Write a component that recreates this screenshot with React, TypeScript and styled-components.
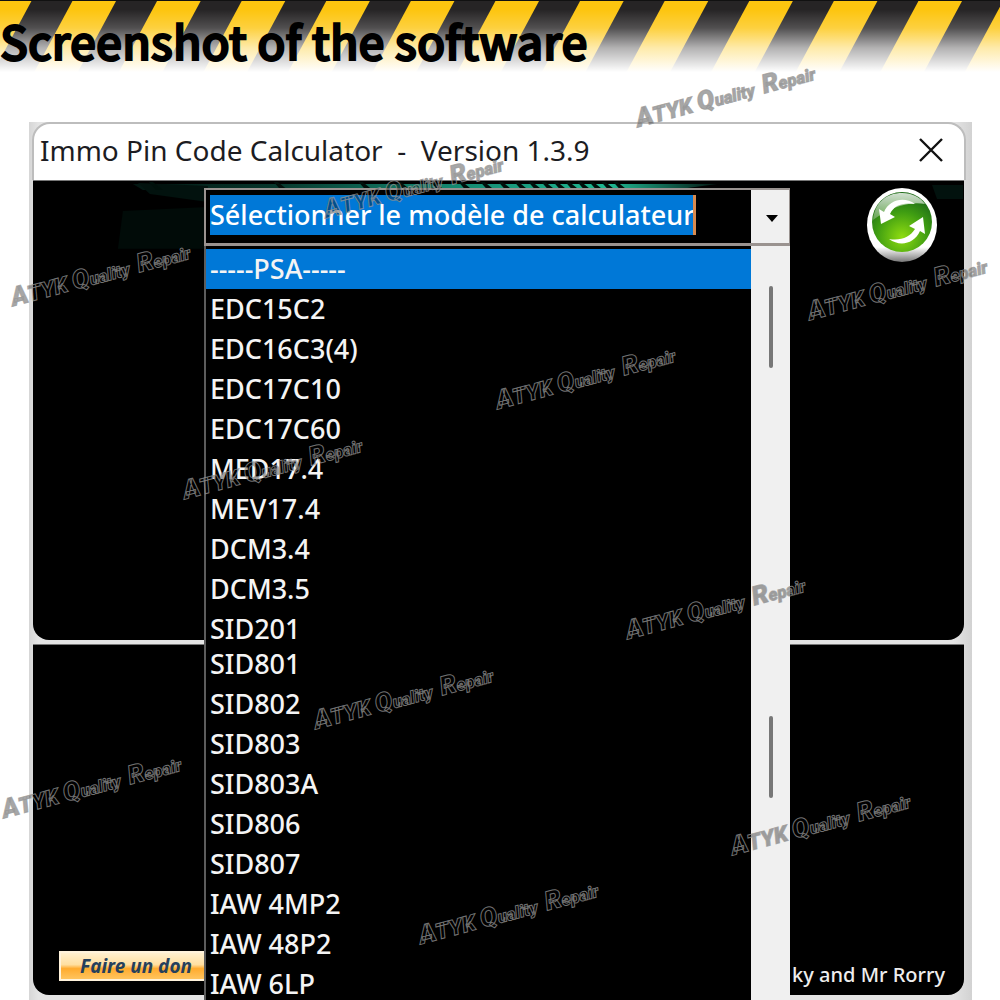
import React, { useState } from "react";
import styled, { createGlobalStyle } from "styled-components";

const Global = createGlobalStyle`
  *, *::before, *::after { box-sizing: border-box; }
  html { overflow: hidden; }
  body { margin: 0; background: #fff; }
`;

const uiFont = `"Noto Sans", "Open Sans", sans-serif`;

const Page = styled.main`
  position: relative;
  height: 100vh;
  overflow: hidden;
  display: flex;
  flex-direction: column;
  background: #fff;
  font-family: ${uiFont};
`;

const Banner = styled.header`
  position: relative;
  display: flex;
  height: 122px;
  padding-top: 12px;
`;

const Stripes = styled.svg`
  position: absolute;
  inset: 0;
  width: 100%;
  height: 80px;
`;

const Heading = styled.h1`
  position: relative;
  margin: 0;
  font: 500 46px/56px "Noto Sans CJK SC", "Noto Sans", sans-serif;
  color: #000;
  -webkit-text-stroke: 2px #000;
  stroke-linejoin: round;
  white-space: nowrap;
`;

const Shot = styled.section`
  display: flex;
  flex-direction: column;
  flex: 1;
  min-height: 0;
  margin: 0 28px 0 29px;
  padding: 0 8px 0 4px;
  background: linear-gradient(90deg, #d6d6d6, #e4e4e4 1%, #e4e4e4 98%, #d2d2d2);
`;

const TitleBar = styled.div`
  display: flex;
  align-items: center;
  justify-content: space-between;
  height: 58px;
  margin: 0 -2px 0 -1px;
  padding: 0 21px 4px 6px;
  border: 2px solid #bdbdbd;
  border-bottom: 0;
  border-radius: 18px 18px 0 0;
  background: #fff;
`;

const Title = styled.h2`
  margin: 0;
  font: 400 28px/36px ${uiFont};
  color: #1c1c22;
  white-space: pre;
`;

const Close = styled.button`
  display: flex;
  padding: 0;
  border: 0;
  background: none;
`;

const Panel = styled.div<{ $upper?: boolean }>`
  position: relative;
  display: flex;
  flex-direction: column;
  justify-content: ${(p) => (p.$upper ? "flex-start" : "flex-end")};
  height: ${(p) => (p.$upper ? "460px" : "351px")};
  margin-bottom: 4px;
  border-top: 1px solid #777;
  border-radius: 0 0 16px 16px;
  background: #000;
`;

const Glow = styled.svg`
  position: absolute;
  inset: 0;
  width: 100%;
  height: 100%;
`;

const Toolbar = styled.div`
  position: relative;
  display: flex;
  align-items: flex-start;
  justify-content: space-between;
  padding: 7px 24px 0 171px;
`;

const Combo = styled.div`
  position: relative;
  z-index: 2;
  width: 586px;
`;

const Field = styled.div`
  display: flex;
  height: 58px;
  border: 2px solid #9a9390;
  border-width: 2px 1px 3px 2px;
  background: #000;
`;

const Entry = styled.div`
  display: flex;
  flex: 1;
  align-items: flex-start;
  padding: 5px 0 0 4px;
`;

const EntryInput = styled.input`
  width: 486px;
  height: 40px;
  padding: 0;
  border: 0;
  border-right: 3px solid #d98a4e;
  outline: 0;
  background: #0078d7;
  color: #fff;
  font: 500 27px/40px ${uiFont};
`;

const DropButton = styled.button`
  display: flex;
  align-items: center;
  justify-content: center;
  width: 38px;
  padding: 4px 0 0 4px;
  border: 0;
  background: #f0f0f0;
`;

const Menu = styled.div`
  position: absolute;
  top: 58px;
  left: 0;
  right: 0;
  display: flex;
  height: 760px;
  border-left: 2px solid #5c5c5c;
  background: #000;
`;

const Options = styled.ul`
  flex: 1;
  margin: 0;
  padding: 3px 0 0;
  list-style: none;
`;

const Option = styled.li<{ $active: boolean; $short?: boolean }>`
  height: ${(p) => (p.$short ? "35px" : "40px")};
  padding-left: 4px;
  background: ${(p) => (p.$active ? "#0078d7" : "transparent")};
  color: #f4f4f4;
  font: 500 27px/40px ${uiFont};
  white-space: pre;
`;

const Track = styled.div`
  display: flex;
  flex-direction: column;
  align-items: center;
  gap: 348px;
  width: 39px;
  padding-top: 40px;
  background: #f0f0f0;
`;

const Thumb = styled.span`
  width: 4px;
  height: 82px;
  border-radius: 2px;
  background: #777;
`;

const Refresh = styled.button`
  display: flex;
  padding: 0;
  border: 0;
  background: none;
`;

const Footer = styled.footer`
  position: relative;
  display: flex;
  align-items: flex-end;
  justify-content: space-between;
  padding: 0 19px 6px 26px;
`;

const Donate = styled.button`
  width: 160px;
  height: 30px;
  margin-bottom: 8px;
  padding: 0 0 0 19px;
  border: 2px solid #fff3dc;
  border-radius: 0;
  background: linear-gradient(#fff0cf, #ffdfa0 45%, #ffab2e 60%, #ffc45e);
  color: #25405c;
  font: italic 700 19px/24px "Noto Sans", sans-serif;
  text-align: left;
`;

const Credit = styled.p`
  margin: 0;
  color: #eee;
  font: 500 20px/28px ${uiFont};
`;

const Mark = styled.span<{ $x: number; $y: number }>`
  position: absolute;
  z-index: 5;
  left: ${(p) => p.$x}px;
  top: ${(p) => p.$y}px;
  transform: rotate(-15deg);
  transform-origin: 0 100%;
  pointer-events: none;
  color: rgba(0, 0, 0, 0.34);
  -webkit-text-stroke: 1px rgba(150, 150, 150, 0.75);
  font: italic 900 26px/26px Roboto, sans-serif;
  white-space: pre;
`;

const Small = styled.span<{ $size: number }>`
  font-size: ${(p) => p.$size}px;
`;

const models = [
  "-----PSA-----", "EDC15C2", "EDC16C3(4)", "EDC17C10", "EDC17C60", "MED17.4", "MEV17.4",
  "DCM3.4", "DCM3.5", "SID201", "SID801", "SID802", "SID803", "SID803A", "SID806", "SID807",
  "IAW 4MP2", "IAW 48P2", "IAW 6LP",
];

const marks = [
  [640, 105], [328, 196], [15, 284], [812, 298], [500, 387], [187, 477],
  [630, 617], [318, 707], [6, 796], [735, 833], [423, 922],
];

const glowTicks = [120, 245, 330, 368, 402, 430, 452, 470, 486, 500, 513, 525, 537, 549, 561, 573, 585];

function HazardStripes() {
  return (
    <Stripes viewBox="0 0 1000 80" preserveAspectRatio="xMinYMin slice" aria-hidden="true">
      <defs>
        <linearGradient id="fade" x1="0" y1="0" x2="0" y2="1">
          <stop offset="0.12" stopColor="#fff" stopOpacity="0" />
          <stop offset="0.35" stopColor="#fff" stopOpacity="0.2" />
          <stop offset="0.6" stopColor="#fff" stopOpacity="0.65" />
          <stop offset="0.9" stopColor="#fff" />
        </linearGradient>
      </defs>
      <rect width="1000" height="80" fill="#fdc50f" />
      {Array.from({ length: 13 }, (_, i) => {
        const x = 32 + i * 84.6;
        return <path key={i} d={`M${x} 0h41l-43 80h-41z`} fill="#262425" />;
      })}
      <rect width="1000" height="1" fill="#111" />
      <rect width="1000" height="80" fill="url(#fade)" />
    </Stripes>
  );
}

function RefreshIcon() {
  return (
    <svg width="76" height="76" viewBox="0 0 76 76" aria-hidden="true">
      <defs>
        <radialGradient id="orb" cx="0.5" cy="0.75" r="0.7">
          <stop offset="0" stopColor="#8fdc10" />
          <stop offset="0.6" stopColor="#3f9d12" />
          <stop offset="1" stopColor="#1f6d18" />
        </radialGradient>
        <linearGradient id="gloss" x1="0" y1="0" x2="0" y2="1">
          <stop offset="0" stopColor="#fff" stopOpacity="0.8" />
          <stop offset="1" stopColor="#fff" stopOpacity="0.25" />
        </linearGradient>
        <linearGradient id="rim" x1="0" y1="0" x2="0" y2="1">
          <stop offset="0.8" stopColor="#fff" />
          <stop offset="1" stopColor="#777" />
        </linearGradient>
      </defs>
      <ellipse cx="38" cy="37" rx="35" ry="37" fill="url(#rim)" />
      <circle cx="38" cy="34" r="30" fill="url(#orb)" />
      <path d="M9 32C11 13 24 5 38 5c10 0 18 4 23 11C44 13 26 20 9 32z" fill="url(#gloss)" />
      <path d="M51 16C40 8 25 12 20 24l-5-3 2 15 14-7-5-3c4-9 13-12 25-10z" fill="#fff" />
      <path d="M25 51c11 8 25 5 31-8l5 3-2-17-14 9 6 3c-5 8-14 12-26 10z" fill="#fff" />
    </svg>
  );
}

function Watermark({ x, y }: { x: number; y: number }) {
  return (
    <Mark $x={x} $y={y} aria-hidden="true">
      A<Small $size={22}>TYK </Small>Q<Small $size={17}>uality  </Small>R<Small $size={17}>epair</Small>
    </Mark>
  );
}

export default function App() {
  const [active, setActive] = useState(0);
  return (
    <Page>
      <Global />
      <Banner>
        <HazardStripes />
        <Heading>Screenshot of the software</Heading>
      </Banner>
      <Shot>
        <TitleBar>
          <Title>Immo Pin Code Calculator  -  Version 1.3.9</Title>
          <Close aria-label="Close">
            <svg width="24" height="24" viewBox="0 0 24 24" fill="none" stroke="#111" strokeWidth="2.4">
              <path d="M1 1l22 22M23 1L1 23" />
            </svg>
          </Close>
        </TitleBar>
        <Panel $upper>
          <Glow viewBox="0 0 932 460" preserveAspectRatio="none" aria-hidden="true">
            <defs>
              <linearGradient id="teal" gradientUnits="userSpaceOnUse" x1="90" y1="0" x2="700" y2="0">
                <stop offset="0" stopColor="#02130f" />
                <stop offset="0.25" stopColor="#07372c" />
                <stop offset="0.5" stopColor="#12806a" />
                <stop offset="0.8" stopColor="#1fb892" />
                <stop offset="1" stopColor="#000" />
              </linearGradient>
            </defs>
            <path d="M100 3H560L685 3L640 9H110z" fill="url(#teal)" />
            <path d="M105 2l70 3v16l-58-8z" fill="#02120e" />
            <path d="M90 30l85-4v42H85z" fill="#010b08" />
            {glowTicks.map((x) => (
              <path key={x} d={`M${x} 1l10 8h-7l-7-8z`} fill="#00100b" />
            ))}
            <path d="M900 4h31v14h-26z" fill="#02120e" />
          </Glow>
          <Toolbar>
            <Combo>
              <Field>
                <Entry>
                  <EntryInput
                    role="combobox"
                    aria-label="Modèle de calculateur"
                    aria-expanded="true"
                    aria-controls="models"
                    defaultValue="Sélectionner le modèle de calculateur"
                  />
                </Entry>
                <DropButton aria-label="Open list">
                  <svg width="12" height="7" viewBox="0 0 12 7"><path d="M0 0h12L6 7z" fill="#000" /></svg>
                </DropButton>
              </Field>
              <Menu>
                <Options id="models" role="listbox" aria-label="Modèles">
                  {models.map((name, i) => (
                    <Option
                      key={name}
                      role="option"
                      aria-selected={i === active}
                      $active={i === active}
                      $short={name === "SID201"}
                      onClick={() => setActive(i)}
                    >
                      {name}
                    </Option>
                  ))}
                </Options>
                <Track>
                  <Thumb />
                  <Thumb />
                </Track>
              </Menu>
            </Combo>
            <Refresh aria-label="Refresh"><RefreshIcon /></Refresh>
          </Toolbar>
        </Panel>
        <Panel>
          <Footer>
            <Donate>Faire un don</Donate>
            <Credit>ky and Mr Rorry</Credit>
          </Footer>
        </Panel>
      </Shot>
      {marks.map(([x, y]) => <Watermark key={`${x}-${y}`} x={x} y={y} />)}
    </Page>
  );
}
